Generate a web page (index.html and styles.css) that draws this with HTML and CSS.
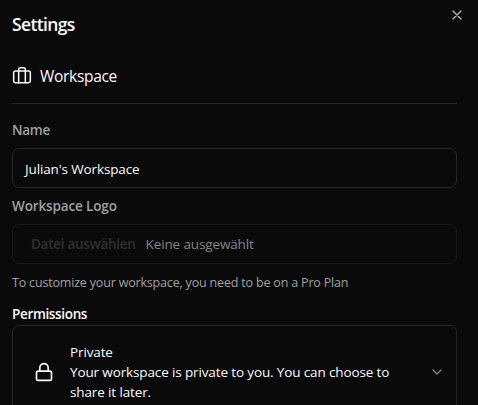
FILE: index.html
```
<!DOCTYPE html>
<html lang="en">
<head>
<meta charset="utf-8">
<title>Settings</title>
<link rel="stylesheet" href="styles.css">
</head>
<body>
<main class="dialog">
  <h2 class="title"><span>Settings</span></h2>
  <svg class="close" viewBox="0 0 24 24"><path d="M18 6 6 18M6 6l12 12"/></svg>
  <div class="section">
    <svg class="icon" viewBox="0 0 24 24"><rect x="2" y="6" width="20" height="14" rx="2"/><path d="M16 20V4a2 2 0 0 0-2-2h-4a2 2 0 0 0-2 2v16"/></svg>
    <span class="section-name">Workspace</span>
  </div>
  <div class="label name-label"><span>Name</span></div>
  <div class="field"><span class="value">Julian's Workspace</span></div>
  <div class="label logo-label"><span>Workspace Logo</span></div>
  <div class="field file"><span class="file-button">Datei auswählen</span><span class="file-status">Keine ausgewählt</span></div>
  <p class="hint"><span>To customize your workspace, you need to be on a Pro Plan</span></p>
  <div class="permissions"><span>Permissions</span></div>
  <div class="select">
    <svg class="icon" viewBox="0 0 24 24"><rect x="3" y="11" width="18" height="11" rx="2"/><path d="M7 11V7a5 5 0 0 1 10 0v4"/></svg>
    <div class="option"><span class="private">Private</span><br><span class="line-a">Your workspace is private to you. You can choose to</span><br><span class="line-b">share it later.</span></div>
    <svg class="chevron" viewBox="0 0 24 24"><path d="m6 9 6 6 6-6"/></svg>
  </div>
</main>
</body>
</html>
```
FILE: styles.css
```
* { box-sizing: border-box; }
body {
  margin: 0;
  height: 405px;
  overflow: hidden;
  background: #0a0a0a;
  color: #fafafa;
  font: 13.5px/20px "Open Sans", "Noto Sans", sans-serif;
  letter-spacing: -0.13px;
  white-space: nowrap;
}
svg { fill: none; stroke: currentColor; stroke-width: 2; stroke-linecap: round; stroke-linejoin: round; flex: none; }
.dialog { position: relative; width: 457px; padding: 10px 0 0 12px; }
.title { margin: 0; font-size: 17.5px; line-height: 28px; font-weight: 600; letter-spacing: -0.65px; }
.close { position: absolute; left: 449px; top: 7px; width: 16px; height: 16px; color: #b4b4b4; }
.section { display: flex; align-items: center; gap: 8px; height: 66px; padding-top: 10px; border-bottom: 1px solid #262626; }
.icon { width: 20px; height: 20px; }
.section .icon { stroke-width: 1.8; }
.section-name { font-size: 15.5px; line-height: 24px; letter-spacing: -0.3px; }
.label { color: #a1a1a1; font-weight: 600; }
.name-label { margin-top: 16px; letter-spacing: -0.3px; }
.field { display: flex; align-items: center; height: 40px; padding: 2px 12px 0; border: 1px solid #262626; border-radius: 7px; }
.name-label + .field { margin-top: 8px; letter-spacing: -0.13px; }
.logo-label { margin: 8px 0; }
.file { padding: 0 18px; border-color: #181818; }
.file-button { color: #303030; font-weight: 600; letter-spacing: -0.27px; margin-right: 10px; }
.file-status { color: #858585; }
.hint { margin: 9px 0 0; font-size: 12.5px; letter-spacing: -0.18px; color: #a1a1a1; }
.permissions { margin-top: 11px; font-weight: 600; letter-spacing: -0.34px; }
.select { display: flex; align-items: center; height: 95px; margin-top: 1px; padding: 0 11px 0 21px; border: 1px solid #262626; border-radius: 7px; }
.select .icon { margin-top: -1px; }
.option { flex: 1; margin: -2px 0 0 16px; }
.chevron { width: 16px; height: 16px; margin-top: -2px; color: #858585; }
```
